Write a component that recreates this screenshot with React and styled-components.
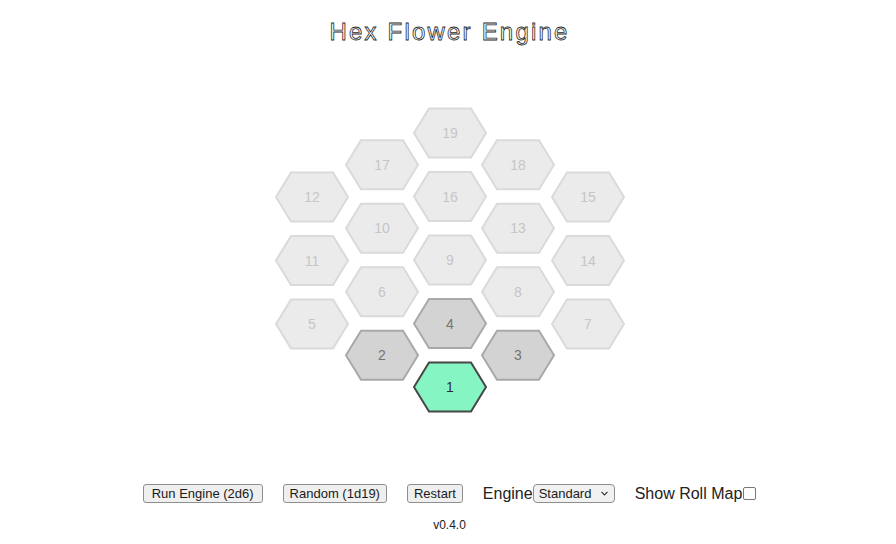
import React, { useState } from 'react';
import styled, { createGlobalStyle } from 'styled-components';

const GlobalStyle = createGlobalStyle`
  html, body {
    margin: 0;
    padding: 0;
    background: #ffffff;
  }
  body {
    font-family: "Liberation Sans", Arial, sans-serif;
    color: #222;
  }
`;

const Page = styled.div`
  display: flex;
  flex-direction: column;
  align-items: center;
  padding-left: 3px;
`;

const Title = styled.h1`
  margin: 18px 0 0;
  font-size: 24px;
  font-weight: normal;
  letter-spacing: 2.2px;
  color: #ffffff;
  -webkit-text-stroke: 0.8px #2a2a2a;
`;

const Flower = styled.svg`
  display: block;
  margin-top: 58px;
  width: 356px;
  height: 316px;
  overflow: visible;
`;

const Controls = styled.div`
  display: flex;
  align-items: center;
  gap: 20px;
  margin-top: 64px;
  height: 19px;
`;

const Button = styled.button`
  font-family: "Liberation Sans", Arial, sans-serif;
  font-size: 13px;
  color: #1a1a1a;
  background: #efefef;
  border: 1px solid #8f8f8f;
  border-radius: 3px;
  padding: 1px ${(p) => (p.$wide ? '8px' : '6px')};
  height: 19px;
  line-height: 15px;
  cursor: pointer;
`;

const Field = styled.label`
  display: flex;
  align-items: center;
  font-size: 16px;
  color: #222;
`;

const SelectWrap = styled.span`
  position: relative;
  display: inline-flex;
  margin-left: 0;
`;

const Select = styled.select`
  appearance: none;
  -webkit-appearance: none;
  font-family: "Liberation Sans", Arial, sans-serif;
  font-size: 13px;
  color: #1a1a1a;
  background: #f1f1f1;
  border: 1px solid #8f8f8f;
  border-radius: 4px;
  height: 19px;
  width: 82px;
  padding: 0 18px 0 5px;
  line-height: 17px;
`;

const Chevron = styled.svg`
  position: absolute;
  right: 7px;
  top: 7px;
  width: 7px;
  height: 5px;
  pointer-events: none;
`;

const Check = styled.input`
  appearance: none;
  -webkit-appearance: none;
  width: 13px;
  height: 13px;
  margin: 0 0 0 1px;
  border: 1.5px solid #77777a;
  border-radius: 2px;
  background: #ffffff;
`;

const Version = styled.div`
  margin-top: 15px;
  font-size: 12px;
  color: #222;
`;

const HEX_W = 72;
const HEX_H = 49;
const SLANT = 15;

const STATES = {
  idle: { fill: '#ebebeb', stroke: '#dadada', text: '#c6c6c6' },
  near: { fill: '#d3d3d3', stroke: '#a9a9a9', text: '#747474' },
  current: { fill: '#86f5c4', stroke: '#474747', text: '#2e2e2e' },
};

// page-space centres of the flower, translated to svg space below
const ORIGIN_X = 272;
const ORIGIN_Y = 104;
const STEP = 63.5;

const columns = [
  { x: 312, top: 197, ids: [12, 11, 5] },
  { x: 382, top: 133 + STEP / 2, ids: [17, 10, 6, 2] },
  { x: 450, top: 133, ids: [19, 16, 9, 4, 1] },
  { x: 518, top: 133 + STEP / 2, ids: [18, 13, 8, 3] },
  { x: 588, top: 197, ids: [15, 14, 7] },
];

const cells = columns.flatMap((col) =>
  col.ids.map((id, i) => ({
    id,
    cx: col.x - ORIGIN_X,
    cy: col.top + i * STEP - ORIGIN_Y,
  }))
);

const hexPoints = (cx, cy) => {
  const hw = HEX_W / 2;
  const hh = HEX_H / 2;
  return [
    [cx - hw, cy],
    [cx - hw + SLANT, cy - hh],
    [cx + hw - SLANT, cy - hh],
    [cx + hw, cy],
    [cx + hw - SLANT, cy + hh],
    [cx - hw + SLANT, cy + hh],
  ]
    .map((p) => p.join(','))
    .join(' ');
};

const Hex = ({ id, cx, cy, state }) => {
  const s = STATES[state];
  return (
    <g>
      <polygon
        points={hexPoints(cx, cy)}
        fill={s.fill}
        stroke={s.stroke}
        strokeWidth="2"
      />
      <text
        x={cx}
        y={cy + 5}
        textAnchor="middle"
        fontFamily='"Liberation Sans", Arial, sans-serif'
        fontSize="14"
        fill={s.text}
      >
        {id}
      </text>
    </g>
  );
};

export default function App() {
  const [current] = useState(1);
  const neighbours = [2, 3, 4];
  const stateOf = (id) =>
    id === current ? 'current' : neighbours.includes(id) ? 'near' : 'idle';

  return (
    <Page>
      <GlobalStyle />
      <Title>Hex Flower Engine</Title>
      <Flower viewBox="0 0 356 316">
        {cells.map((c) => (
          <Hex key={c.id} {...c} state={stateOf(c.id)} />
        ))}
      </Flower>
      <Controls>
        <Button $wide>Run Engine (2d6)</Button>
        <Button>Random (1d19)</Button>
        <Button>Restart</Button>
        <Field>
          Engine
          <SelectWrap>
            <Select defaultValue="standard">
              <option value="standard">Standard</option>
            </Select>
            <Chevron viewBox="0 0 7 5">
              <path d="M0.5 0.8 L3.5 4 L6.5 0.8" fill="none" stroke="#333" strokeWidth="1.1" />
            </Chevron>
          </SelectWrap>
        </Field>
        <Field>
          Show Roll Map
          <Check type="checkbox" />
        </Field>
      </Controls>
      <Version>v0.4.0</Version>
    </Page>
  );
}
